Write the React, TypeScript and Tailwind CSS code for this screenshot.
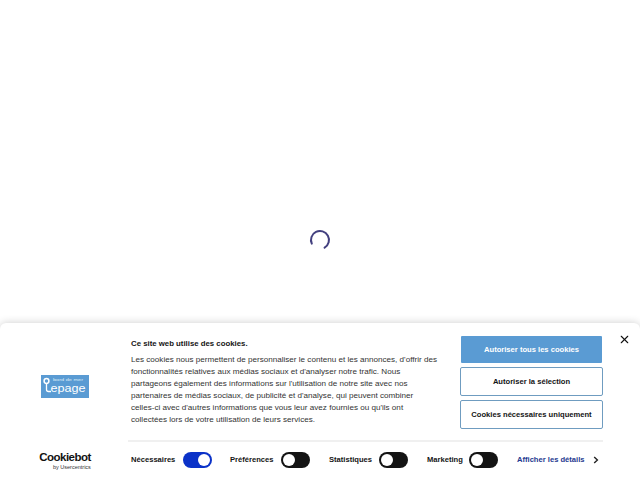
import { X } from "lucide-react";

function Toggle({ on }: { on?: boolean }) {
  return (
    <span
      className={`flex h-[16px] w-[29px] items-center rounded-full ${
        on ? "justify-end bg-[#0b32c8]" : "justify-start bg-[#141414]"
      } px-[2px]`}
    >
      <span className="h-[12px] w-[12px] rounded-full bg-white" />
    </span>
  );
}

function Consent({ label, on, width }: { label: string; on?: boolean; width: string }) {
  return (
    <div className={`flex items-center justify-between ${width}`}>
      <span className="text-[7.6px] font-bold text-[#141414]">{label}</span>
      <Toggle on={on} />
    </div>
  );
}

export default function App() {
  return (
    <div className="relative h-[480px] w-[640px] overflow-hidden bg-white font-['Liberation_Sans',Arial,sans-serif]">
      {/* loader behind the banner */}
      <div className="flex h-full items-center justify-center">
        <svg width="22" height="22" viewBox="0 0 22 22" fill="none">
          <path d="M2.8 14.7A9 9 0 1 1 15.6 18.7" stroke="#43407f" strokeWidth="2" strokeLinecap="round" />
        </svg>
      </div>

      <div className="absolute inset-x-0 bottom-0 flex h-[157px] rounded-t-[6px] bg-white shadow-[0_0_8px_rgba(0,0,0,0.2)]">
        <div className="flex w-[131px] shrink-0 flex-col items-center pt-[52px]">
          <svg width="48" height="23" viewBox="0 0 48 23" className="mr-[2px] shrink-0">
            <rect width="48" height="23" fill="#5a9bd3" />
            <circle cx="5.5" cy="6" r="2.4" fill="none" stroke="#fff" strokeWidth="1.5" />
            <path d="M5.5 8.5v6a2 2 0 0 0 2 2H10" fill="none" stroke="#fff" strokeWidth="1.3" />
            <text x="12" y="6" fontSize="4" textLength="30" lengthAdjust="spacingAndGlyphs" fill="#dcebf7" fontFamily="Liberation Sans">
              bord de mer
            </text>
            <text x="9.5" y="17" fontSize="11" textLength="35" lengthAdjust="spacingAndGlyphs" fill="#fff" fontFamily="Liberation Sans">
              epage
            </text>
          </svg>
          <div className="mt-[54px] mr-[1px] flex flex-col items-end text-[#111]">
            <span className="text-[11.5px] leading-[11px] font-bold tracking-[-0.5px]">Cookiebot</span>
            <span className="mt-[1px] text-[5.5px] leading-[6px] text-[#333]">by Usercentrics</span>
          </div>
        </div>

        <div className="flex flex-1 flex-col">
          <div className="flex">
            <div className="w-[329px] shrink-0 pt-[15px]">
              <h1 className="text-[7.8px] leading-[12px] font-bold text-[#141414]">
                Ce site web utilise des cookies.
              </h1>
              <p className="mt-[4px] text-[8.1px] leading-[12px] text-[#333]">
                Les cookies nous permettent de personnaliser le contenu et les annonces, d'offrir des
                <br />
                fonctionnalités relatives aux médias sociaux et d'analyser notre trafic. Nous
                <br />
                partageons également des informations sur l'utilisation de notre site avec nos
                <br />
                partenaires de médias sociaux, de publicité et d'analyse, qui peuvent combiner
                <br />
                celles-ci avec d'autres informations que vous leur avez fournies ou qu'ils ont
                <br />
                collectées lors de votre utilisation de leurs services.
              </p>
            </div>
            <div className="flex w-[143px] shrink-0 flex-col gap-[4px] pt-[13px]">
              <button className="ml-[1px] h-[27px] w-[141px] rounded-[1px] bg-[#5a9bd3] text-[7.6px] font-bold text-white">
                Autoriser tous les cookies
              </button>
              <button className="h-[29px] w-[143px] rounded-[2px] border-[1.5px] border-[#6f9cc0] bg-white text-[7.6px] font-bold text-[#141414]">
                Autoriser la sélection
              </button>
              <button className="h-[29px] w-[143px] rounded-[2px] border-[1.5px] border-[#6f9cc0] bg-white text-[7.6px] font-bold text-[#141414]">
                Cookies nécessaires uniquement
              </button>
            </div>
            <button className="ml-[15px] mt-[9px] h-[14px] self-start text-[#111]">
              <X size={13} strokeWidth={2} />
            </button>
          </div>

          <div className="mt-[11px] ml-[-3px] h-[2px] w-[475px] bg-[#f0f0f0]" />

          <div className="mt-[10px] flex items-center">
            <Consent label="Nécessaires" on width="w-[81px]" />
            <div className="w-[18px]" />
            <Consent label="Préférences" width="w-[80px]" />
            <div className="w-[19px]" />
            <Consent label="Statistiques" width="w-[79px]" />
            <div className="w-[19px]" />
            <Consent label="Marketing" width="w-[71px]" />
            <span className="ml-[19px] text-[7.6px] font-bold text-[#24398f]">Afficher les détails</span>
            <svg width="6" height="8" viewBox="0 0 6 8" className="ml-[8px]" fill="none">
              <path d="M1.2 1L4.4 4L1.2 7" stroke="#222" strokeWidth="1.4" />
            </svg>
          </div>
        </div>
      </div>
    </div>
  );
}
